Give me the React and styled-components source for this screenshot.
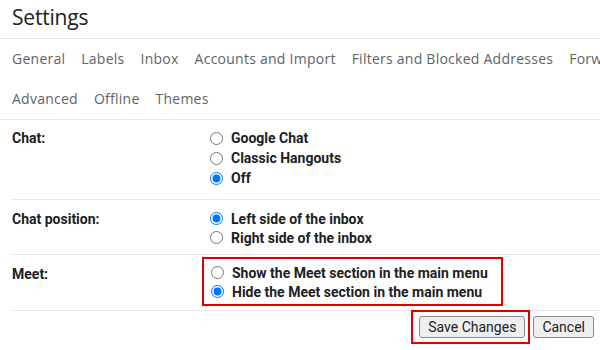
import styled, { createGlobalStyle } from 'styled-components';

const GlobalStyle = createGlobalStyle`
  body {
    margin: 0;
    background: #fff;
    font-family: Roboto, "Liberation Sans", sans-serif;
    overflow: hidden;
  }
`;

const Page = styled.div`
  width: 600px;
  height: 350px;
  overflow: hidden;
`;

const Header = styled.div`
  height: 38px;
  padding-left: 12px;
  display: flex;
  align-items: center;
  border-bottom: 1px solid #e8e8e8;
`;

const Title = styled.h1`
  margin: 0 0 5px;
  font-family: "Open Sans", Roboto, sans-serif;
  font-size: 21px;
  font-weight: 400;
  letter-spacing: -0.2px;
  color: #202124;
`;

const Tabs = styled.nav`
  border-bottom: 1px solid #e8e8e8;
`;

const TabRow = styled.div`
  height: 40px;
  display: flex;
  align-items: center;
  gap: 16px;
  padding-left: 12px;
  padding-bottom: 1px;
  box-sizing: border-box;
  white-space: nowrap;
`;

const Tab = styled.span`
  font-family: "Open Sans", Roboto, sans-serif;
  font-size: 14px;
  font-weight: 500;
  letter-spacing: 0.25px;
  color: #5f6368;
`;

const Section = styled.div`
  margin-left: 12px;
  display: grid;
  grid-template-columns: 197px 1fr;
  padding: ${p => p.$pad};
  border-bottom: 1px solid #e8e8e8;
`;

const Label = styled.div`
  font-size: 14px;
  font-weight: 700;
  color: #202124;
  line-height: 20px;
  padding-top: ${p => p.$top || 0}px;
`;

const Options = styled.div`
  display: flex;
  flex-direction: column;
`;

const Highlight = styled.div`
  margin-left: -7px;
  width: 291px;
  padding: 4px 0 3px 6px;
  border: 2px solid #e00000;
  display: flex;
  flex-direction: column;
`;

const Option = styled.label`
  display: flex;
  align-items: center;
  gap: 8px;
  height: ${p => p.$h || 20}px;
  font-size: 14px;
  font-weight: 700;
  color: #202124;
  white-space: nowrap;

  input {
    margin: 0 0 0 1px;
    width: 13px;
    height: 13px;
  }
`;

const Actions = styled.div`
  display: flex;
  justify-content: flex-end;
  align-items: flex-start;
  gap: 3px;
  padding-right: 6px;
  margin-top: -1px;
`;

const ButtonFrame = styled.div`
  padding: 4px 3px 4px 6px;
  border: 2px solid #e00000;
`;

const Button = styled.button`
  height: 22px;
  padding: 0 8px;
  font-family: Roboto, "Liberation Sans", sans-serif;
  font-size: 14px;
  color: #202124;
  background: #efefef;
  border: 1px solid #8a8a8a;
  border-radius: 3px;
  margin-top: ${p => (p.$offset ? '6px' : '0')};
`;

function Radio({ name, label, checked, h }) {
  return (
    <Option $h={h}>
      <input type="radio" name={name} defaultChecked={checked} />
      {label}
    </Option>
  );
}

export default function App() {
  return (
    <Page>
      <GlobalStyle />
      <Header>
        <Title>Settings</Title>
      </Header>
      <Tabs>
        <TabRow>
          <Tab>General</Tab>
          <Tab>Labels</Tab>
          <Tab>Inbox</Tab>
          <Tab>Accounts and Import</Tab>
          <Tab>Filters and Blocked Addresses</Tab>
          <Tab>Forwarding and POP/IMAP</Tab>
        </TabRow>
        <TabRow>
          <Tab>Advanced</Tab>
          <Tab>Offline</Tab>
          <Tab>Themes</Tab>
        </TabRow>
      </Tabs>

      <Section $pad="8px 0 11px">
        <Label>Chat:</Label>
        <Options>
          <Radio name="chat" label="Google Chat" />
          <Radio name="chat" label="Classic Hangouts" />
          <Radio name="chat" label="Off" checked />
        </Options>
      </Section>

      <Section $pad="9px 0 7px">
        <Label>Chat position:</Label>
        <Options>
          <Radio name="pos" label="Left side of the inbox" checked h={19} />
          <Radio name="pos" label="Right side of the inbox" h={19} />
        </Options>
      </Section>

      <Section $pad="2px 0 4px">
        <Label $top={7}>Meet:</Label>
        <Options>
          <Highlight>
            <Radio name="meet" label="Show the Meet section in the main menu" h={19} />
            <Radio name="meet" label="Hide the Meet section in the main menu" checked h={19} />
          </Highlight>
        </Options>
      </Section>

      <Actions>
        <ButtonFrame>
          <Button>Save Changes</Button>
        </ButtonFrame>
        <Button $offset>Cancel</Button>
      </Actions>
    </Page>
  );
}
